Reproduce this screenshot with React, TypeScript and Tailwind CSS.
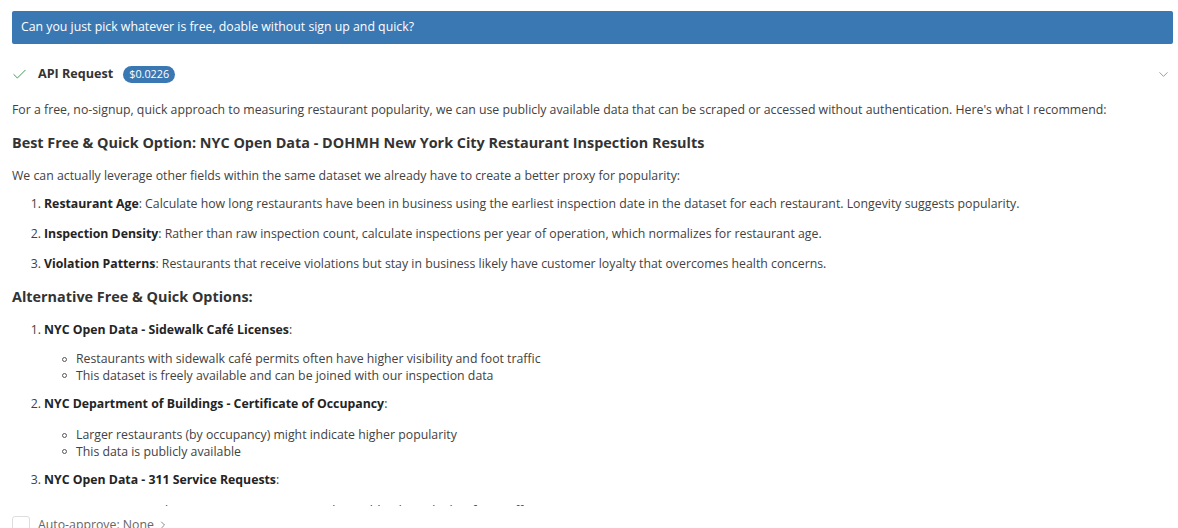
import { Check, ChevronDown, ChevronRight } from "lucide-react";

const Li = ({ n, title, children }: { n: number; title: string; children?: React.ReactNode }) => (
  <li className="flex h-[17px] items-center">
    <span className="w-[32px] shrink-0 text-right pr-[3px]">{n}.</span>
    <span>
      <b className="font-bold text-[#242424]">{title}</b>
      {children}
    </span>
  </li>
);

const Sub = ({ children }: { children: React.ReactNode }) => (
  <div className="flex h-[16.5px] items-center">
    <span className="w-[64px] shrink-0 flex justify-end pr-[9px]">
      <span className="block size-[5px] rounded-full border border-[#555]" />
    </span>
    <span>{children}</span>
  </div>
);

export default function App() {
  return (
    <div className="w-[1178px] h-[528px] overflow-hidden bg-white text-[12.3px] text-[#424242] font-['Open_Sans',sans-serif]">
      <div className="h-[506px] overflow-hidden pl-3 pr-[5px] pt-[11px]">
        <div className="h-[33px] rounded-[2px] bg-[#3a78b4] px-[9px] flex items-center text-white text-[12.3px]">
          Can you just pick whatever is free, doable without sign up and quick?
        </div>
        <div className="mt-[18px] h-[24px] flex items-center">
          <Check className="size-[17px] text-[#3f9a4f] -ml-[1px]" strokeWidth={1.4} />
          <span className="ml-[10px] font-bold text-[#333] text-[12.6px]">API Request</span>
          <span className="ml-[10px] rounded-full bg-[#3a78b4] text-white text-[10.8px] px-[6px] h-[17px] flex items-center">$0.0226</span>
          <ChevronDown className="ml-auto mr-[2px] size-[15px] text-[#888]" strokeWidth={1.3} />
        </div>
        <p className="mt-[15px] h-[17px] leading-[17px]">
          For a free, no-signup, quick approach to measuring restaurant popularity, we can use publicly available data that can be scraped or accessed without authentication. Here's what I recommend:
        </p>
        <h3 className="mt-[15px] h-[20px] leading-[20px] text-[14.4px] font-bold text-[#333]">
          Best Free &amp; Quick Option: NYC Open Data - DOHMH New York City Restaurant Inspection Results
        </h3>
        <p className="mt-[14px] h-[17px] leading-[17px]">
          We can actually leverage other fields within the same dataset we already have to create a better proxy for popularity:
        </p>
        <ol className="mt-[12px] flex flex-col gap-[13px]">
          <Li n={1} title="Restaurant Age">: Calculate how long restaurants have been in business using the earliest inspection date in the dataset for each restaurant. Longevity suggests popularity.</Li>
          <Li n={2} title="Inspection Density">: Rather than raw inspection count, calculate inspections per year of operation, which normalizes for restaurant age.</Li>
          <Li n={3} title="Violation Patterns">: Restaurants that receive violations but stay in business likely have customer loyalty that overcomes health concerns.</Li>
        </ol>
        <h3 className="mt-[14px] h-[20px] leading-[20px] text-[14.4px] font-bold text-[#333]">
          Alternative Free &amp; Quick Options:
        </h3>
        <ol className="mt-[15px]">
          <Li n={1} title="NYC Open Data - Sidewalk Café Licenses">:</Li>
          <div className="mt-[12px]">
            <Sub>Restaurants with sidewalk café permits often have higher visibility and foot traffic</Sub>
            <Sub>This dataset is freely available and can be joined with our inspection data</Sub>
          </div>
          <div className="mt-[12px]">
            <Li n={2} title="NYC Department of Buildings - Certificate of Occupancy">:</Li>
          </div>
          <div className="mt-[14px]">
            <Sub>Larger restaurants (by occupancy) might indicate higher popularity</Sub>
            <Sub>This data is publicly available</Sub>
          </div>
          <div className="mt-[12px]">
            <Li n={3} title="NYC Open Data - 311 Service Requests">:</Li>
          </div>
          <div className="mt-[14px]">
            <Sub>Restaurants with more service requests nearby could indicate higher foot traffic areas</Sub>
          </div>
        </ol>
      </div>
      <div className="mt-[10px] flex items-center px-3">
        <span className="block size-[18px] rounded-[3px] border border-[#ddd] bg-white" />
        <span className="ml-[8px] text-[#666]">Auto-approve: None</span>
        <ChevronRight className="ml-[3px] size-[12px] text-[#666]" strokeWidth={1.5} />
      </div>
    </div>
  );
}
